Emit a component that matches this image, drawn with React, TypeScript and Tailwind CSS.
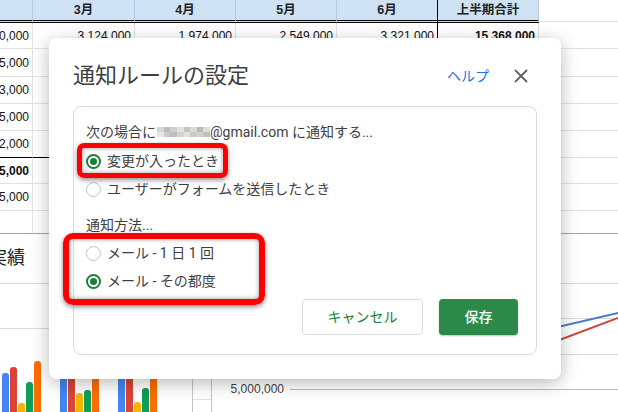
import React from 'react';

const sans = "font-['Roboto','Noto_Sans_CJK_JP',sans-serif]";
const sheetFont = "font-['Liberation_Sans','Noto_Sans_CJK_JP',sans-serif]";

const colW = ['w-[33px]', 'w-[102px]', 'w-[101px]', 'w-[101px]', 'w-[101px]', 'w-[101px]'];
const headers = ['', '3月', '4月', '5月', '6月', '上半期合計'];

type Row = { h: string; c0: string; bold?: boolean; vals?: string[]; line?: string };

const rows: Row[] = [
  { h: 'h-[26px]', c0: '0,000', vals: ['3,124,000', '1,974,000', '2,549,000', '3,321,000', '15,368,000'] },
  { h: 'h-[28px]', c0: '5,000' },
  { h: 'h-[27px]', c0: '3,000' },
  { h: 'h-[27px]', c0: '5,000' },
  { h: 'h-[27px]', c0: '2,000', line: 'border-b-black' },
  { h: 'h-[26px]', c0: '5,000', bold: true },
  { h: 'h-[27px]', c0: '5,000' },
  { h: 'h-[23px]', c0: '', line: 'border-b-[#a6a6a6]' },
];

const mosaic = [
  'bg-[#d6d6d6]', 'bg-[#bcbcbc]', 'bg-[#cfcfcf]', 'bg-[#e3e3e3]', 'bg-[#c4c4c4]', 'bg-[#d9d9d9]', 'bg-[#b9b9b9]', 'bg-[#dedede]',
  'bg-[#e6e6e6]', 'bg-[#cacaca]', 'bg-[#bfbfbf]', 'bg-[#d4d4d4]', 'bg-[#e1e1e1]', 'bg-[#c9c9c9]', 'bg-[#d1d1d1]', 'bg-[#c0c0c0]',
];

// bar heights per group: blue, red, yellow, green, orange
const groups = [
  [39, 45, 9, 30, 51],
  [50, 48, 19, 22, 55],
  [52, 46, 10, 24, 58],
];
const barColors = ['bg-[#4285f4]', 'bg-[#db4437]', 'bg-[#f4b400]', 'bg-[#0f9d58]', 'bg-[#ff6d00]'];

const Sheet: React.FC = () => (
  <div className={`flex flex-col ${sheetFont} text-[12px] text-[#111]`}>
    <div className="flex h-[23px]">
      {headers.map((h, i) => (
        <div
          key={i}
          className={`${colW[i]} shrink-0 h-full bg-[#cfe2f3] border-b-[3px] border-double border-b-black border-r ${i === 4 ? 'border-r-black' : 'border-r-[#b4c7dc]'} flex items-center justify-center text-[12.5px] font-bold text-[#222]`}
        >
          {h}
        </div>
      ))}
      <div className="flex-1">
        <div className="h-[22px] border-b border-[#e2e2e2]" />
      </div>
    </div>
    {rows.map((r, ri) => (
      <div key={ri} className={`flex ${r.h}`}>
        {colW.map((w, ci) => {
          const text = ci === 0 ? r.c0 : r.vals ? r.vals[ci - 1] : '';
          const bold = (ci === 0 && r.bold) || (ci === 5 && r.vals);
          return (
            <div
              key={ci}
              className={`${w} shrink-0 h-full border-b border-r ${r.line ?? 'border-b-[#e2e2e2]'} ${ci === 4 ? 'border-r-black' : 'border-r-[#e2e2e2]'} flex items-center justify-end pr-[3px] whitespace-nowrap overflow-hidden ${bold ? 'font-bold' : ''}`}
            >
              {text}
            </div>
          );
        })}
        <div className={`flex-1 border-b ${ri === 7 ? 'border-b-[#a6a6a6]' : 'border-b-[#e2e2e2]'}`} />
      </div>
    ))}
    <div className="flex h-[178px]">
      <div className="w-[192px] shrink-0 flex flex-col overflow-hidden">
        <div className={`mt-[15px] h-[18px] leading-[18px] text-[18px] whitespace-nowrap ml-[-47px] text-[#222] ${sans}`}>売上実績</div>
        <div className="mt-[16px] border-t border-[#d9d9d9]" />
        <div className="mt-[44px] border-t border-[#d9d9d9]" />
        <div className="flex-1 flex items-end pl-[2px] gap-[19px]">
          {groups.map((g, gi) => (
            <div key={gi} className="flex items-end gap-[1px]">
              {g.map((h, bi) => (
                <div key={bi} className={`w-[7px] rounded-t-[3px] ${barColors[bi]}`} style={{ height: h }} />
              ))}
            </div>
          ))}
        </div>
      </div>
      <div className="w-[20px] shrink-0 border-x border-[#c4c4c4] flex flex-col">
        <div className="h-[165px]" />
        <div className="border-t border-[#e2e2e2]" />
      </div>
      <div className="flex-1 flex">
        <div className="w-[78px] shrink-0 flex flex-col items-end pr-[6px]">
          <div className="mt-[147px] leading-[16px] text-[#444]">5,000,000</div>
        </div>
        <svg width="328" height="178" className="shrink-0">
          <line x1="0" y1="49.5" x2="328" y2="49.5" stroke="#d9d9d9" />
          <line x1="0" y1="84.5" x2="328" y2="84.5" stroke="#d9d9d9" />
          <line x1="0" y1="120.5" x2="328" y2="120.5" stroke="#d9d9d9" />
          <line x1="0" y1="155.5" x2="328" y2="155.5" stroke="#bdbdbd" />
          <polyline points="160,118 272,92 328,79" fill="none" stroke="#4a7dc9" strokeWidth="2" />
          <polyline points="160,135 272,105 328,84" fill="none" stroke="#c84b45" strokeWidth="2" />
        </svg>
      </div>
    </div>
  </div>
);

const Radio: React.FC<{ checked?: boolean }> = ({ checked }) =>
  checked ? (
    <span className="w-[15px] h-[15px] rounded-full border-2 border-[#188038] flex items-center justify-center shrink-0">
      <span className="w-[7px] h-[7px] rounded-full bg-[#188038]" />
    </span>
  ) : (
    <span className="w-[15px] h-[15px] rounded-full border-[1.5px] border-[#c4c4c4] shrink-0" />
  );

const Option: React.FC<{ checked?: boolean; label: string }> = ({ checked, label }) => (
  <div className="flex items-center h-[28px] gap-[6px]">
    <Radio checked={checked} />
    <span className="whitespace-nowrap">{label}</span>
  </div>
);

const Dialog: React.FC = () => (
  <div className={`absolute left-[49px] top-[38px] w-[512px] h-[341px] bg-white rounded-[8px] shadow-[0_4px_18px_rgba(0,0,0,0.28)] px-6 pt-6 ${sans}`}>
    <div className="flex items-center h-[28px] mb-4">
      <h2 className="text-[22px] leading-[28px] text-[#3c4043] font-normal">通知ルールの設定</h2>
      <span className="ml-auto text-[14px] text-[#1a73e8]">ヘルプ</span>
      <button className="ml-[20px] mr-[4px] w-6 h-6 flex items-center justify-center text-[#5f6368]">
        <svg width="24" height="24" viewBox="0 0 24 24" fill="none" stroke="currentColor" strokeWidth="1.8">
          <path d="M6 6L18 18M18 6L6 18" />
        </svg>
      </button>
    </div>
    <div className="border border-[#dadce0] rounded-[8px] pt-[15px] pb-[19px] pl-3 pr-[18px] text-[14px] text-[#3c4043]">
      <div className="h-[20px] leading-[20px] flex items-center whitespace-nowrap">
        <span>次の場合に</span>
        <span className="grid grid-cols-8 w-[53px] h-[10px] ml-[1px]">
          {mosaic.map((c, i) => (
            <span key={i} className={c} />
          ))}
        </span>
        <span>@gmail.com に通知する...</span>
      </div>
      <div className="mt-[5px]">
        <Option checked label="変更が入ったとき" />
        <Option label="ユーザーがフォームを送信したとき" />
      </div>
      <div className="mt-[12px] h-[20px] leading-[20px]">通知方法...</div>
      <div className="mt-[4px]">
        <Option label="メール - 1 日 1 回" />
        <Option checked label="メール - その都度" />
      </div>
      <div className="mt-[4px] flex justify-end gap-4">
        <button className="w-[121px] h-[36px] rounded-[4px] border border-[#dadce0] text-[#188038] text-[14px]">キャンセル</button>
        <button className="w-[79px] h-[36px] rounded-[4px] bg-[#2b8a47] text-white text-[14px] font-medium shadow-[0_1px_2px_rgba(0,0,0,0.25)]">保存</button>
      </div>
    </div>
    <div className="absolute left-[28px] top-[105px] w-[151px] h-[35px] rounded-[7px] border-[5px] border-[#ff0000] shadow-[0_2px_5px_rgba(0,0,0,0.45),inset_0_0_5px_rgba(0,0,0,0.4)]" />
    <div className="absolute left-[14px] top-[195px] w-[202px] h-[72px] rounded-[10px] border-[6px] border-[#ff0000] shadow-[0_2px_5px_rgba(0,0,0,0.45),inset_0_0_5px_rgba(0,0,0,0.4)]" />
  </div>
);

export default function App() {
  return (
    <div className="relative w-[618px] h-[412px] overflow-hidden bg-white">
      <Sheet />
      <Dialog />
    </div>
  );
}
